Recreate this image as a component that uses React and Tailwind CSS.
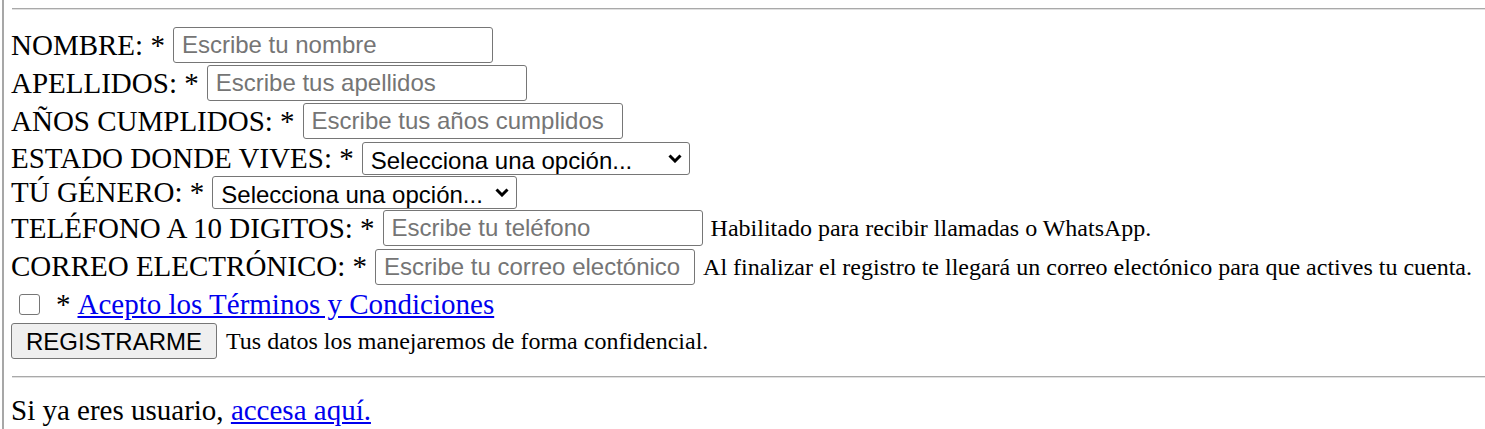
const serif = "font-['Liberation_Serif','Times_New_Roman',serif]"

function Field({ label, placeholder, note, rowH = 'h-[38px]' }) {
  return (
    <div className={`flex items-center ${rowH} whitespace-nowrap`}>
      <span className="text-[29px] leading-none">{label}: *</span>
      <input
        type="text"
        placeholder={placeholder}
        className="ml-[8px] w-[320px] h-[36px] border border-[#767676] rounded-[3px] px-[8px] bg-white text-[24px] font-['Liberation_Sans',Arial,sans-serif] text-black placeholder:text-[#757575] outline-none"
      />
      {note && <span className="ml-[8px] text-[24px] leading-none">{note}</span>}
    </div>
  )
}

function Select({ label, width, rowH }) {
  return (
    <div className={`flex items-center ${rowH} whitespace-nowrap`}>
      <span className="text-[29px] leading-none">{label}: *</span>
      <div className={`relative ml-[8px] ${width} h-[33px]`}>
        <select className="appearance-none w-full h-full border border-[#767676] rounded-[3px] pl-[8px] bg-white text-[24px] font-['Liberation_Sans',Arial,sans-serif] text-black outline-none">
          <option>Selecciona una opción...</option>
        </select>
        <svg className="absolute right-[8px] top-[12px] pointer-events-none" width="14" height="9" viewBox="0 0 14 9">
          <path d="M1.5 1.5 L7 7 L12.5 1.5" fill="none" stroke="#000" strokeWidth="3" />
        </svg>
      </div>
    </div>
  )
}

export default function App() {
  return (
    <div className={`${serif} text-black bg-white min-h-[429px] ml-[2px] border-l-[2px] border-[#a7a7a7] pl-[6px] overflow-hidden`}>
      <div className="pt-[8px] -mr-[10px]">
        <div className="h-[2px] ml-[2px] bg-[#a9a9a9] border-b border-[#e0e0e0]" />
      </div>
      <form className="mt-[16px] pl-[1px]" onSubmit={e => e.preventDefault()}>
        <Field label="NOMBRE" placeholder="Escribe tu nombre" />
        <Field label="APELLIDOS" placeholder="Escribe tus apellidos" />
        <Field label="AÑOS CUMPLIDOS" placeholder="Escribe tus años cumplidos" />
        <Select label="ESTADO DONDE VIVES" width="w-[328px]" rowH="h-[36px]" />
        <Select label="TÚ GÉNERO" width="w-[305px]" rowH="h-[33px]" />
        <Field label="TELÉFONO A 10 DIGITOS" placeholder="Escribe tu teléfono" note="Habilitado para recibir llamadas o WhatsApp." />
        <Field
          label="CORREO ELECTRÓNICO"
          placeholder="Escribe tu correo electónico"
          note="Al finalizar el registro te llegará un correo electónico para que actives tu cuenta."
          rowH="h-[39px]"
        />
        <div className="flex items-center h-[36px] whitespace-nowrap">
          <span className="ml-[8px] w-[21px] h-[21px] border border-[#767676] rounded-[3px] bg-white" />
          <span className="ml-[16px] text-[29px] leading-none">*</span>
          <a href="#" className="ml-[7px] text-[29px] leading-none text-[#0000ee] underline">
            Acepto los Términos y Condiciones
          </a>
        </div>
        <div className="flex items-center h-[38px] whitespace-nowrap">
          <button
            type="submit"
            className="w-[206px] h-[36px] bg-[#efefef] border border-[#767676] rounded-[3px] text-[24px] font-['Liberation_Sans',Arial,sans-serif] text-black"
          >
            REGISTRARME
          </button>
          <span className="ml-[9px] text-[24px] leading-none">Tus datos los manejaremos de forma confidencial.</span>
        </div>
      </form>
      <div className="mt-[16px] -mr-[10px]">
        <div className="h-[2px] ml-[2px] bg-[#a9a9a9] border-b border-[#e0e0e0]" />
      </div>
      <p className="mt-[16px] pl-[1px] text-[29px] leading-[33px] whitespace-nowrap">
        Si ya eres usuario, <a href="#" className="text-[#0000ee] underline">accesa aquí.</a>
      </p>
    </div>
  )
}
